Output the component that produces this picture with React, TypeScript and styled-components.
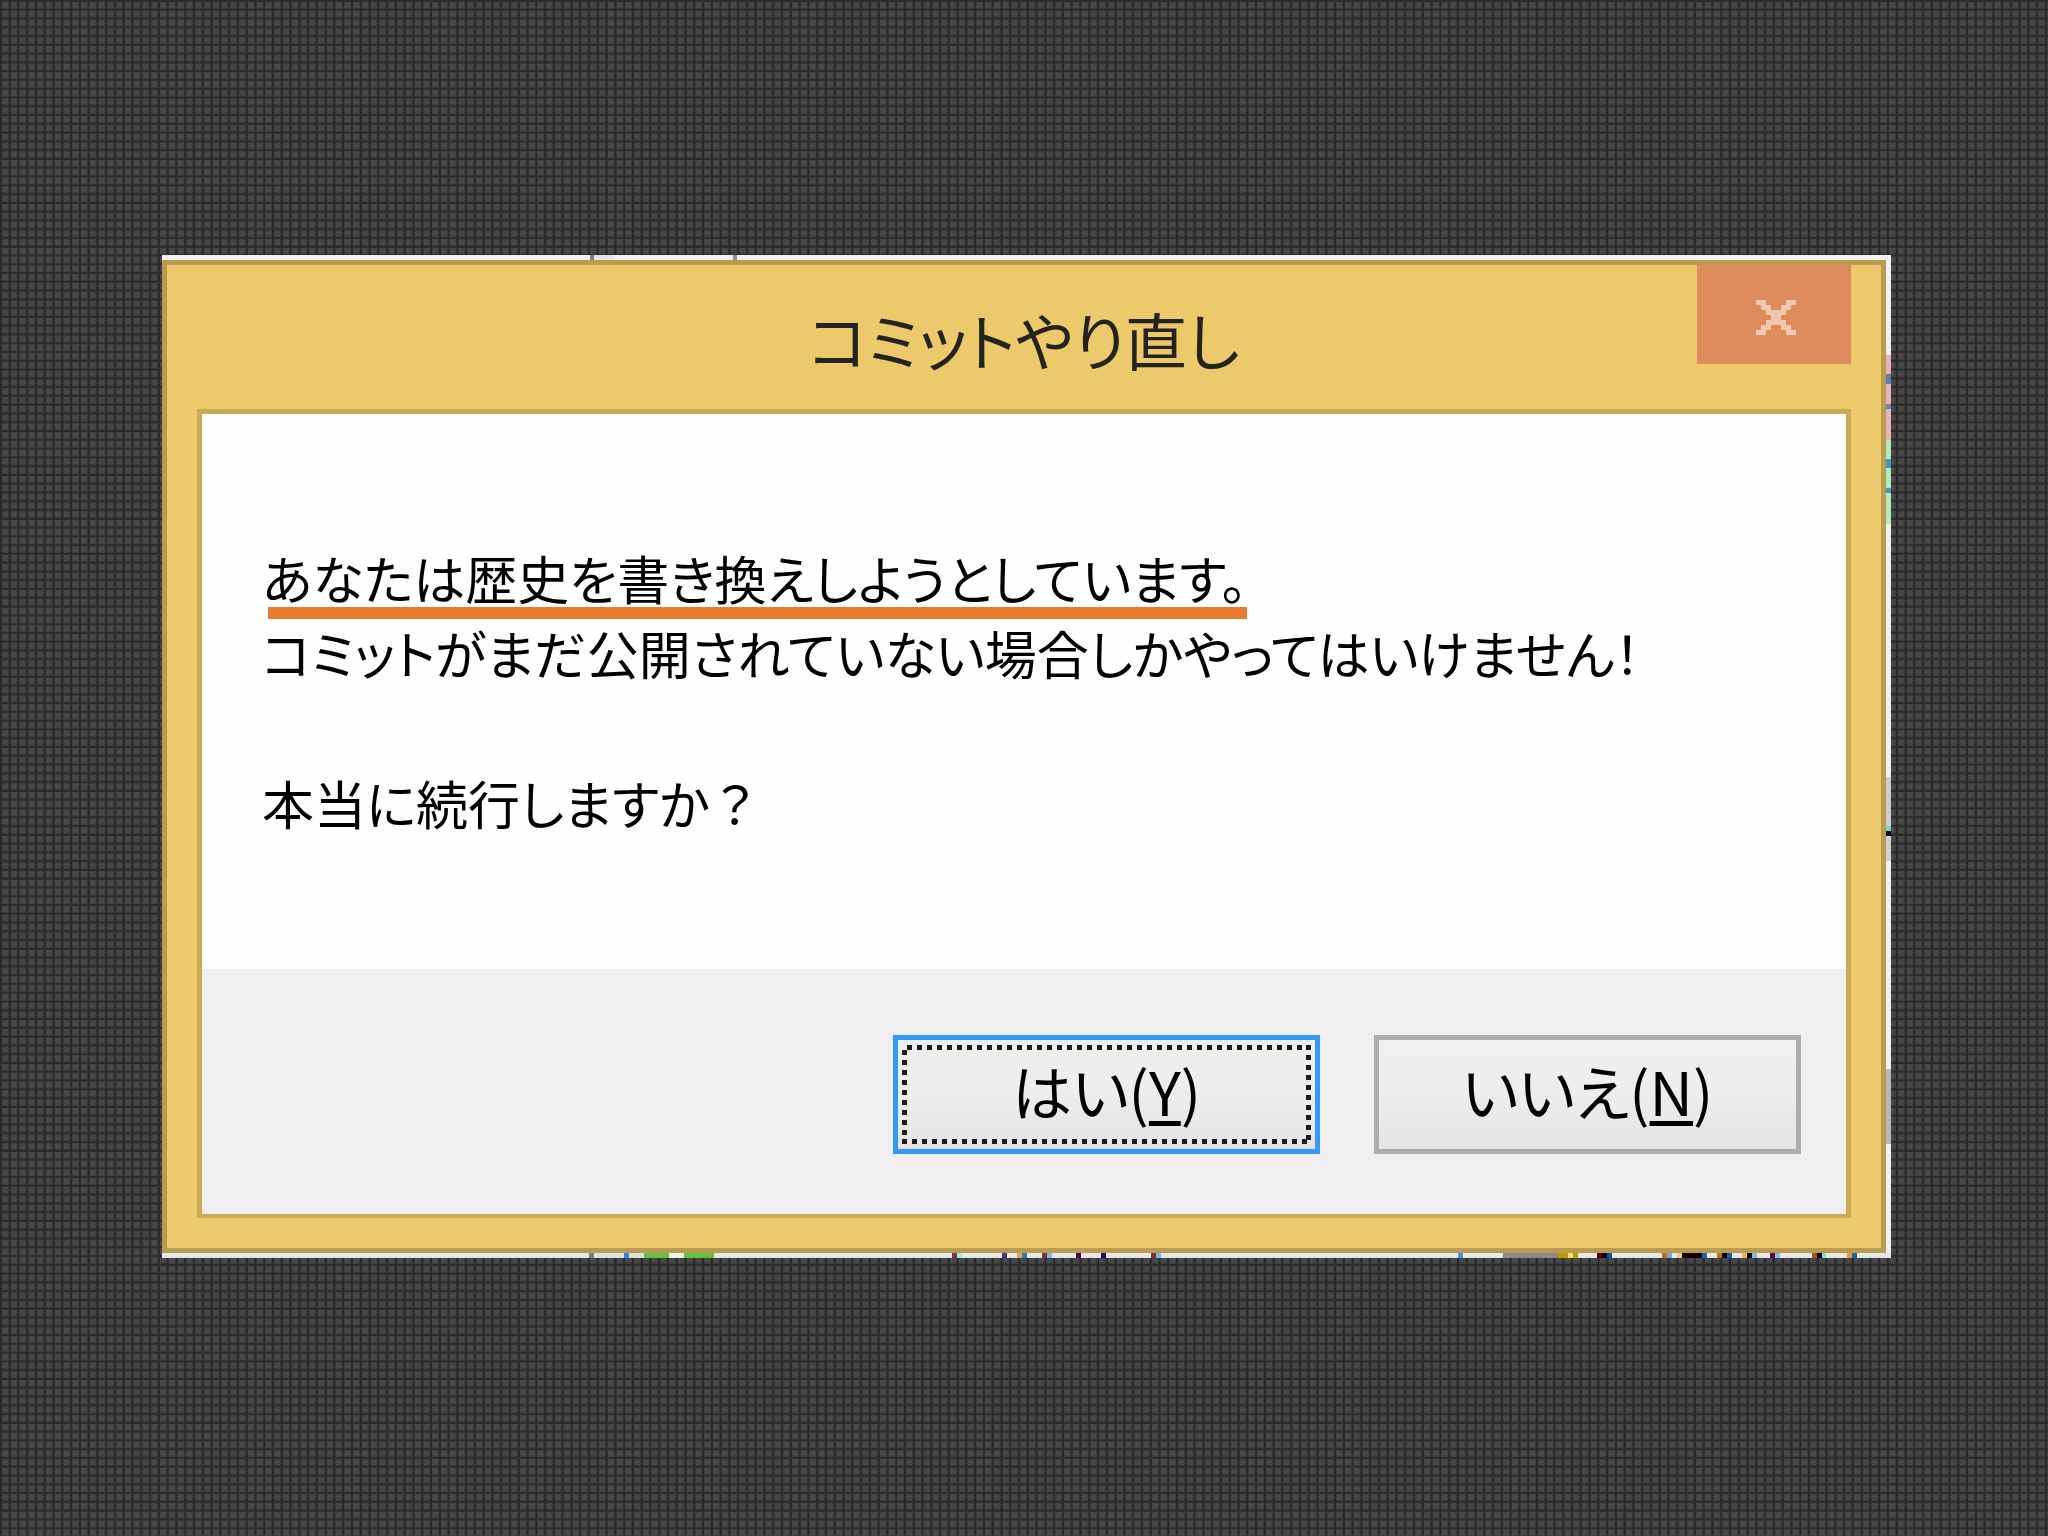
import React from "react";
import styled, { createGlobalStyle, css } from "styled-components";

type Mark = [start: number, end: number, color: string];

/* Hard-edged strip of colours: every mark is a [start, end, colour] run over a base tone. */
const strip = (direction: string, length: number, base: string, marks: Mark[]) => {
  const at = (n: number) => `${((n / length) * 100).toFixed(3)}%`;
  const stops: string[] = [];
  let cursor = 0;
  marks.forEach(([start, end, color]) => {
    if (start > cursor) stops.push(`${base} ${at(cursor)} ${at(start)}`);
    stops.push(`${color} ${at(start)} ${at(end)}`);
    cursor = end;
  });
  stops.push(`${base} ${at(cursor)} 100%`);
  return `linear-gradient(${direction}, ${stops.join(", ")})`;
};

const topMarks: Mark[] = [
  [428, 432, "#7c8288"],
  [432, 452, "#e2e4ea"],
  [571, 575, "#8c9096"],
];

const rightMarks: Mark[] = [
  [95, 114, "#eab2b8"],
  [114, 124, "#5f7fb0"],
  [124, 144, "#eab2bc"],
  [144, 149, "#5f86b0"],
  [149, 180, "#eab2bc"],
  [180, 199, "#b2eab8"],
  [199, 208, "#3f9cb8"],
  [208, 228, "#b2eab8"],
  [228, 233, "#3f9cb8"],
  [233, 264, "#b2eab8"],
  [517, 566, "#cfcdd0"],
  [566, 571, "#86cccc"],
  [571, 576, "#0c0430"],
  [576, 601, "#cdd3d0"],
  [809, 884, "#b9b7b9"],
];

const bottomMarks: Mark[] = [
  [427, 432, "#7c7f78"],
  [432, 462, "#e0e2e0"],
  [462, 467, "#2f86e8"],
  [467, 482, "#dedede"],
  [482, 507, "#66c040"],
  [507, 522, "#f0f0ee"],
  [522, 552, "#66c040"],
  [790, 795, "#7c3058"],
  [795, 800, "#a8e4d8"],
  [840, 845, "#4c3088"],
  [855, 860, "#e8a058"],
  [860, 865, "#2f78b8"],
  [880, 885, "#7c3038"],
  [885, 890, "#78b8e0"],
  [914, 919, "#500058"],
  [939, 944, "#2c0058"],
  [989, 994, "#7c3038"],
  [994, 999, "#78b8e8"],
  [1296, 1301, "#3f90e8"],
  [1341, 1396, "#8c8a88"],
  [1396, 1406, "#b89c00"],
  [1406, 1411, "#f8e060"],
  [1411, 1416, "#b89c00"],
  [1435, 1440, "#500000"],
  [1440, 1445, "#100000"],
  [1445, 1450, "#0058a0"],
  [1500, 1505, "#b87020"],
  [1505, 1510, "#78a8e0"],
  [1515, 1520, "#f0c888"],
  [1520, 1540, "#0c0004"],
  [1540, 1545, "#1868a8"],
  [1555, 1560, "#b07828"],
  [1560, 1565, "#000000"],
  [1565, 1570, "#1860a0"],
  [1580, 1585, "#f0b068"],
  [1585, 1590, "#000000"],
  [1590, 1595, "#88b8e8"],
  [1608, 1613, "#580838"],
  [1613, 1618, "#88b8e0"],
  [1650, 1655, "#a05818"],
  [1655, 1660, "#000020"],
  [1660, 1664, "#90d8e0"],
  [1685, 1690, "#e09848"],
  [1690, 1695, "#1860a8"],
];

const GlobalStyle = createGlobalStyle`
  body {
    margin: 0;
    background: #474747;
    font-family: "Noto Sans CJK JP", sans-serif;
    font-feature-settings: "palt";
  }
`;

const Page = styled.main`
  box-sizing: border-box;
  min-height: 100vh;
  padding: 255px 157px 278px 162px;
`;

const Backdrop = styled.svg`
  position: fixed;
  inset: 0;
  z-index: -1;
  width: 100%;
  height: 100%;
`;

const Capture = styled.div`
  display: grid;
  grid-template: 5px auto 5px / 1fr 5px;
`;

const HorizontalFringe = styled.div<{ $marks: Mark[]; $base: string }>`
  grid-column: 1 / -1;
  background: ${({ $marks, $base }) => strip("to right", 1729, $base, $marks)};
`;

const VerticalFringe = styled.div<{ $marks: Mark[] }>`
  background: ${({ $marks }) => strip("to bottom", 993, "#f1f1f3", $marks)};
`;

const Dialog = styled.section`
  border: 5px solid #b99b52;
  padding: 0 30px 30px;
  background: #ecc96a;
`;

const TitleBar = styled.header`
  display: grid;
  grid-template-columns: 154px 1fr 154px;
  height: 144px;
`;

const Title = styled.h1`
  grid-column: 2;
  margin: 0;
  padding-top: 32px;
  color: #23231f;
  font-size: 62px;
  font-weight: 400;
  line-height: 84px;
  text-align: center;
  white-space: nowrap;
`;

const CloseButton = styled.button`
  display: grid;
  place-items: center;
  height: 99px;
  border: 0;
  padding: 6px 0 0 4px;
  background: #dd8b5a;
`;

const CloseIcon = styled.svg`
  width: 40px;
  height: 35px;
  fill: #f1c9b0;
`;

const Client = styled.div`
  border: 5px solid #cba955;
  border-bottom-width: 4px;
  background: #f0eef0;
`;

const Message = styled.div`
  box-sizing: border-box;
  min-height: 555px;
  padding: 126px 60px 0;
  background: #fefefe;
  color: #000;
  font-size: 52px;
  line-height: 75px;
`;

const Paragraph = styled.p`
  margin: 0 0 75px;
`;

const Marked = styled.strong`
  position: relative;
  font-weight: 400;

  &::after {
    content: "";
    position: absolute;
    right: 0;
    bottom: -4px;
    left: 6px;
    height: 12px;
    background: #ea7b30;
  }
`;

const FullWidth = styled.span`
  font-feature-settings: normal;
`;

const Actions = styled.footer`
  display: flex;
  justify-content: flex-end;
  gap: 54px;
  padding: 66px 45px 60px;
`;

const focusDots = css`
  &::before {
    content: "";
    position: absolute;
    inset: 5px 4px;
    background:
      repeating-linear-gradient(to right, transparent 0 5px, #1c1c1c 5px 10px) top / 100% 5px,
      repeating-linear-gradient(to right, #1c1c1c 0 5px, transparent 5px 10px) bottom / 100% 5px,
      repeating-linear-gradient(to bottom, transparent 0 5px, #1c1c1c 5px 10px) left / 5px 100%,
      repeating-linear-gradient(to bottom, #1c1c1c 0 5px, transparent 5px 10px) right / 5px 100%;
    background-repeat: no-repeat;
  }
`;

const ActionButton = styled.button<{ $primary?: boolean }>`
  position: relative;
  box-sizing: border-box;
  width: 427px;
  height: 119px;
  border: 5px solid ${({ $primary }) => ($primary ? "#3597f8" : "#adabad")};
  padding: 0 0 10px;
  background: linear-gradient(#f0eff0, #ededed 45%, #e4e4e5);
  color: #000;
  font: inherit;
  font-size: 60px;
  line-height: 75px;
  ${({ $primary }) => $primary && focusDots}
`;

const AccessKey = styled.span`
  text-decoration: underline;
  text-decoration-thickness: 5px;
  text-underline-offset: 5px;
  text-decoration-skip-ink: none;
`;

export default function App() {
  return (
    <>
      <GlobalStyle />
      <Backdrop viewBox="0 0 1400 1050" preserveAspectRatio="xMinYMin slice" aria-hidden="true">
        <defs>
          <pattern id="mesh" x="1.4" y="1.4" width="6" height="6" patternUnits="userSpaceOnUse">
            <rect width="6" height="6" fill="#2b2b2b" />
            <rect width="4.4" height="4.4" fill="#474747" />
          </pattern>
        </defs>
        <rect width="1400" height="1050" fill="url(#mesh)" />
      </Backdrop>
      <Page>
        <Capture>
          <HorizontalFringe $marks={topMarks} $base="#f1f1f5" />
          <Dialog role="dialog" aria-labelledby="dialog-title" aria-describedby="dialog-message">
            <TitleBar>
              <Title id="dialog-title">コミットやり直し</Title>
              <CloseButton type="button" aria-label="閉じる">
                <CloseIcon viewBox="0 0 8 7" preserveAspectRatio="none" shapeRendering="crispEdges" aria-hidden="true">
                  <path d="M0 0h2v1H0zM6 0h2v1H6zM1 1h2v1H1zM5 1h2v1H5zM2 2h4v1H2zM3 3h2v1H3zM2 4h4v1H2zM1 5h2v1H1zM5 5h2v1H5zM0 6h2v1H0zM6 6h2v1H6z" />
                </CloseIcon>
              </CloseButton>
            </TitleBar>
            <Client>
              <Message id="dialog-message">
                <Paragraph>
                  <Marked>あなたは歴史を書き換えしようとしています。</Marked>
                  <br />
                  コミットがまだ公開されていない場合しかやってはいけません！
                </Paragraph>
                <Paragraph>
                  本当に続行しますか<FullWidth>？</FullWidth>
                </Paragraph>
              </Message>
              <Actions>
                <ActionButton type="button" $primary>
                  はい(<AccessKey>Y</AccessKey>)
                </ActionButton>
                <ActionButton type="button">
                  いいえ(<AccessKey>N</AccessKey>)
                </ActionButton>
              </Actions>
            </Client>
          </Dialog>
          <VerticalFringe $marks={rightMarks} />
          <HorizontalFringe $marks={bottomMarks} $base="#e6e8e6" />
        </Capture>
      </Page>
    </>
  );
}
